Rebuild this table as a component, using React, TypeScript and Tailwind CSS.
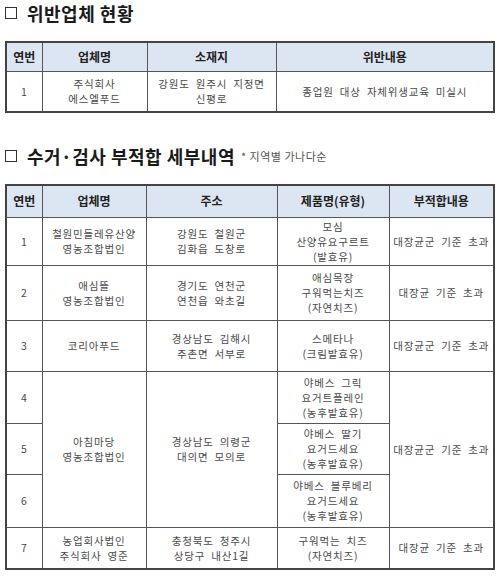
import React from "react";

const font = { fontFamily: '"Noto Sans CJK KR", "Noto Sans", sans-serif' };

const th = "bg-[#dce6f2] border border-[#555] font-bold text-[12px] text-[#222] text-center align-middle p-0";
const td = "border border-[#555] text-[10.5px] tracking-[0.8px] [word-spacing:3px] text-[#4a4a4a] text-center align-middle leading-[15px] p-0";

function Lines({ t }: { t: string[] }) {
  return (
    <>
      {t.map((l, i) => (
        <div key={i}>{l}</div>
      ))}
    </>
  );
}

export default function App() {
  return (
    <div className="w-[500px] h-[578px] bg-white overflow-hidden" style={font}>
      <div className="pl-[5px] pt-[2px] h-[24px] flex items-center text-[18px] font-bold text-[#1a1a1a] leading-none">
        <span className="inline-block w-[12px] h-[12px] border-[1.5px] border-[#333] mr-[10px]" />
        <span className="tracking-[0.5px]">위반업체 현황</span>
      </div>
      <div className="h-[17px]" />
      <table className="ml-[5px] w-[488px] border-collapse border-2 border-[#444] table-fixed">
        <colgroup>
          <col className="w-[36px]" />
          <col className="w-[105px]" />
          <col className="w-[129px]" />
          <col className="w-[218px]" />
        </colgroup>
        <thead>
          <tr className="h-[29px]">
            <th className={th}>연번</th>
            <th className={th}>업체명</th>
            <th className={th}>소재지</th>
            <th className={th}>위반내용</th>
          </tr>
        </thead>
        <tbody>
          <tr className="h-[41px]">
            <td className={td}>1</td>
            <td className={td}><Lines t={["주식회사", "에스엘푸드"]} /></td>
            <td className={td}><Lines t={["강원도 원주시 지정면", "신평로"]} /></td>
            <td className={td}>종업원 대상 자체위생교육 미실시</td>
          </tr>
        </tbody>
      </table>
      <div className="h-[33px]" />
      <div className="pl-[5px] h-[20px] flex items-center text-[18px] font-bold text-[#1a1a1a] leading-none">
        <span className="inline-block w-[12px] h-[12px] border-[1.5px] border-[#333] mr-[10px]" />
        <span className="tracking-[0.5px]">수거·검사 부적합 세부내역</span>
        <span className="ml-[6px] text-[11px] font-normal text-[#555] tracking-[0.5px]">* 지역별 가나다순</span>
      </div>
      <div className="h-[18px]" />
      <table className="ml-[5px] w-[488px] border-collapse border-2 border-[#444] table-fixed">
        <colgroup>
          <col className="w-[36px]" />
          <col className="w-[104px]" />
          <col className="w-[131px]" />
          <col className="w-[112px]" />
          <col className="w-[105px]" />
        </colgroup>
        <thead>
          <tr className="h-[32px]">
            <th className={th}>연번</th>
            <th className={th}>업체명</th>
            <th className={th}>주소</th>
            <th className={th}>제품명(유형)</th>
            <th className={th}>부적합내용</th>
          </tr>
        </thead>
        <tbody>
          <tr className="h-[48px]">
            <td className={td}>1</td>
            <td className={td}><Lines t={["철원민들레유산양", "영농조합법인"]} /></td>
            <td className={td}><Lines t={["강원도 철원군", "김화읍 도창로"]} /></td>
            <td className={td}><Lines t={["모심", "산양유요구르트", "(발효유)"]} /></td>
            <td className={td}>대장균군 기준 초과</td>
          </tr>
          <tr className="h-[55px]">
            <td className={td}>2</td>
            <td className={td}><Lines t={["애심뜰", "영농조합법인"]} /></td>
            <td className={td}><Lines t={["경기도 연천군", "연천읍 와초길"]} /></td>
            <td className={td}><Lines t={["애심목장", "구워먹는치즈", "(자연치즈)"]} /></td>
            <td className={td}>대장균 기준 초과</td>
          </tr>
          <tr className="h-[51px]">
            <td className={td}>3</td>
            <td className={td}>코리아푸드</td>
            <td className={td}><Lines t={["경상남도 김해시", "주촌면 서부로"]} /></td>
            <td className={td}><Lines t={["스메타나", "(크림발효유)"]} /></td>
            <td className={td}>대장균군 기준 초과</td>
          </tr>
          <tr className="h-[52px]">
            <td className={td}>4</td>
            <td className={td} rowSpan={3}><Lines t={["아침마당", "영농조합법인"]} /></td>
            <td className={td} rowSpan={3}><Lines t={["경상남도 의령군", "대의면 모의로"]} /></td>
            <td className={td}><Lines t={["야베스 그릭", "요거트플레인", "(농후발효유)"]} /></td>
            <td className={td} rowSpan={3}>대장균군 기준 초과</td>
          </tr>
          <tr className="h-[51px]">
            <td className={td}>5</td>
            <td className={td}><Lines t={["야베스 딸기", "요거드세요", "(농후발효유)"]} /></td>
          </tr>
          <tr className="h-[53px]">
            <td className={td}>6</td>
            <td className={td}><Lines t={["야베스 블루베리", "요거드세요", "(농후발효유)"]} /></td>
          </tr>
          <tr className="h-[42px]">
            <td className={td}>7</td>
            <td className={td}><Lines t={["농업회사법인", "주식회사 영준"]} /></td>
            <td className={td}><Lines t={["충청북도 청주시", "상당구 내산1길"]} /></td>
            <td className={td}><Lines t={["구워먹는 치즈", "(자연치즈)"]} /></td>
            <td className={td}>대장균 기준 초과</td>
          </tr>
        </tbody>
      </table>
    </div>
  );
}
